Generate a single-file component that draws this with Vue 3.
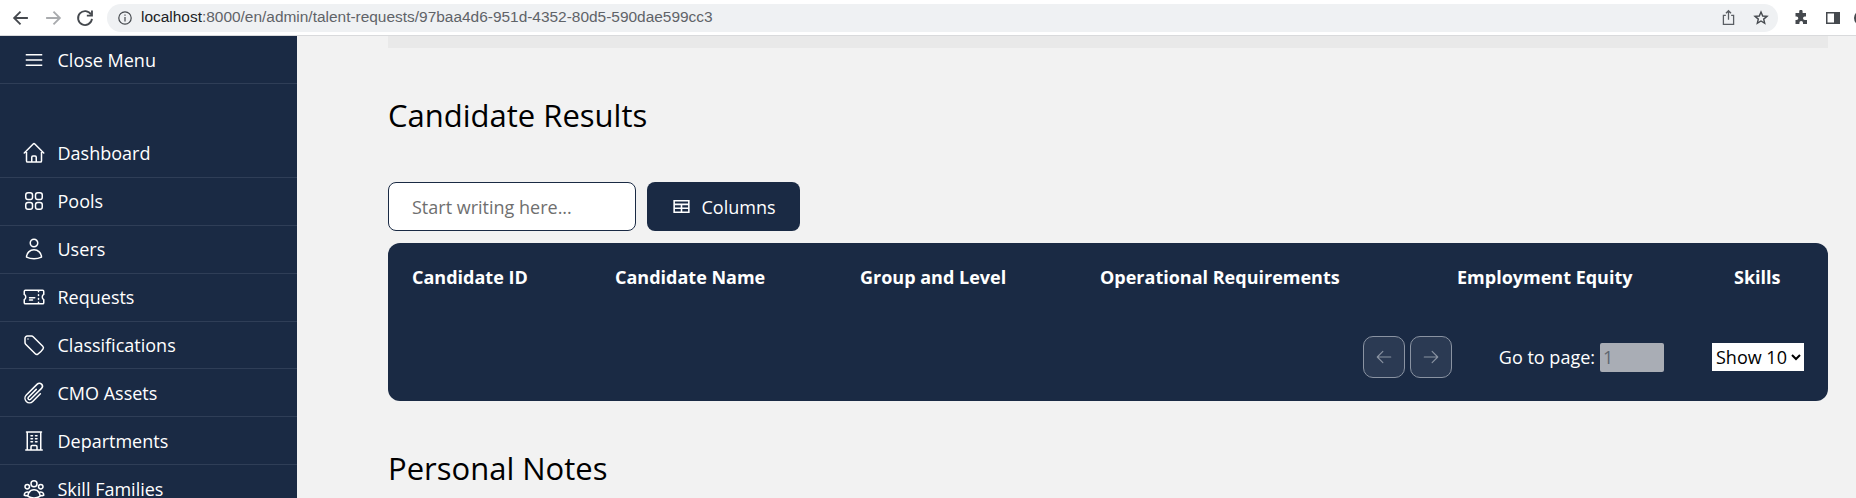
<script setup>
const navItems = [
  { label: 'Dashboard', d: 'M2.25 12l8.954-8.955c.44-.439 1.152-.439 1.591 0L21.75 12M4.5 9.75v10.125c0 .621.504 1.125 1.125 1.125H9.75v-4.875c0-.621.504-1.125 1.125-1.125h2.25c.621 0 1.125.504 1.125 1.125V21h4.125c.621 0 1.125-.504 1.125-1.125V9.75M8.25 21h8.25' },
  { label: 'Pools', d: 'M3.75 6A2.25 2.25 0 016 3.75h2.25A2.25 2.25 0 0110.5 6v2.25a2.25 2.25 0 01-2.25 2.25H6a2.25 2.25 0 01-2.25-2.25V6zM3.75 15.75A2.25 2.25 0 016 13.5h2.25a2.25 2.25 0 012.25 2.25V18a2.25 2.25 0 01-2.25 2.25H6A2.25 2.25 0 013.75 18v-2.25zM13.5 6a2.25 2.25 0 012.25-2.25H18A2.25 2.25 0 0120.25 6v2.25A2.25 2.25 0 0118 10.5h-2.25a2.25 2.25 0 01-2.25-2.25V6zM13.5 15.75a2.25 2.25 0 012.25-2.25H18a2.25 2.25 0 012.25 2.25V18A2.25 2.25 0 0118 20.25h-2.25A2.25 2.25 0 0113.5 18v-2.25z' },
  { label: 'Users', d: 'M15.75 6a3.75 3.75 0 11-7.5 0 3.75 3.75 0 017.5 0zM4.501 20.118a7.5 7.5 0 0114.998 0A17.933 17.933 0 0112 21.75c-2.676 0-5.216-.584-7.499-1.632z' },
  { label: 'Requests', d: 'M16.5 6v.75m0 3v.75m0 3v.75m0 3V18m-9-5.25h5.25M7.5 15h3M3.375 5.25c-.621 0-1.125.504-1.125 1.125v3.026a2.999 2.999 0 010 5.198v3.026c0 .621.504 1.125 1.125 1.125h17.25c.621 0 1.125-.504 1.125-1.125v-3.026a2.999 2.999 0 010-5.198V6.375c0-.621-.504-1.125-1.125-1.125H3.375z' },
  { label: 'Classifications', d: 'M9.568 3H5.25A2.25 2.25 0 003 5.25v4.318c0 .597.237 1.17.659 1.591l9.581 9.581c.699.699 1.78.872 2.607.33a18.095 18.095 0 005.223-5.223c.542-.827.369-1.908-.33-2.607L11.16 3.66A2.25 2.25 0 009.568 3zM6 6h.008v.008H6V6z' },
  { label: 'CMO Assets', d: 'M18.375 12.739l-7.693 7.693a4.5 4.5 0 01-6.364-6.364l10.94-10.94A3 3 0 1119.5 7.372L8.552 18.32m.009-.01l-.01.01m5.699-9.941l-7.81 7.81a1.5 1.5 0 002.112 2.13' },
  { label: 'Departments', d: 'M3.75 21h16.5M4.5 3h15M5.25 3v18m13.5-18v18M9 6.75h1.5m-1.5 3h1.5m-1.5 3h1.5m3-6H15m-1.5 3H15m-1.5 3H15M9 21v-3.375c0-.621.504-1.125 1.125-1.125h3.75c.621 0 1.125.504 1.125 1.125V21' },
  { label: 'Skill Families', d: 'M18 18.72a9.094 9.094 0 003.741-.479 3 3 0 00-4.682-2.72m.94 3.198l.001.031c0 .225-.012.447-.037.666A11.944 11.944 0 0112 21c-2.17 0-4.207-.576-5.963-1.584A6.062 6.062 0 016 18.719m12 0a5.971 5.971 0 00-.941-3.197m0 0A5.995 5.995 0 0012 12.75a5.995 5.995 0 00-5.058 2.772m0 0a3 3 0 00-4.681 2.72 8.986 8.986 0 003.74.477m.94-3.197a5.971 5.971 0 00-.94 3.197M15 6.75a3 3 0 11-6 0 3 3 0 016 0zm6 3a2.25 2.25 0 11-4.5 0 2.25 2.25 0 014.5 0zm-13.5 0a2.25 2.25 0 11-4.5 0 2.25 2.25 0 014.5 0z' }
]

const columns = ['Candidate ID', 'Candidate Name', 'Group and Level', 'Operational Requirements', 'Employment Equity', 'Skills']
</script>

<template>
  <div class="page">
    <header class="browser-bar">
      <svg class="nav-ico" viewBox="0 0 24 24" fill="none" stroke="#45494e" stroke-width="2"><path d="M19.5 12H5M11.5 5l-7 7 7 7" /></svg>
      <svg class="nav-ico" viewBox="0 0 24 24" fill="none" stroke="#a9abae" stroke-width="2"><path d="M4.5 12H19M12.5 5l7 7-7 7" /></svg>
      <svg class="nav-ico" viewBox="0 0 24 24" fill="none" stroke="#45494e" stroke-width="2"><path d="M18.6 8.2A7.600 7.600 0 1 0 19.600 13" /><path d="M19.600 3.800v5.600H14" /></svg>
      <div class="address">
        <svg class="info-ico" viewBox="0 0 16 16" fill="none" stroke="#45494e" stroke-width="1.200"><circle cx="8" cy="8" r="6.200" /><path d="M8 7v4.400M8 4.400v1.300" /></svg>
        <span class="url"><b>localhost</b>:8000/en/admin/talent-requests/97baa4d6-951d-4352-80d5-590dae599cc3</span>
        <svg class="addr-ico share" viewBox="0 0 16 16" fill="none" stroke="#5a5e63" stroke-width="1.200"><path d="M5.500 6H3.200v8.400h9.600V6h-2.300M8 10V1.800M5.600 4 8 1.600 10.400 4" /></svg>
        <svg class="addr-ico" viewBox="0 0 16 16" fill="none" stroke="#45494e" stroke-width="1.400"><path d="M8 2l1.700 4 4.300.3-3.300 2.800 1 4.200L8 11l-3.700 2.300 1-4.200L2 6.300l4.300-.3z" /></svg>
      </div>
      <svg class="ext-ico puzzle" viewBox="0 0 16 16" fill="#45494e"><path d="M6.200 1.500a1.700 1.700 0 0 1 3.400 0V3h3.400v3.400h-1.200a1.800 1.800 0 0 0 0 3.600H14v4H10v-1.200a1.800 1.800 0 0 0-3.600 0V14H2.500v-4h1a1.800 1.800 0 0 0 0-3.600h-1V3h3.700z" /></svg>
      <svg class="ext-ico panel" viewBox="0 0 16 16"><path fill="#45494e" d="M1 2h14v12H1z" /><path fill="#fff" d="M2.500 3.500H9v9H2.500z" /></svg>
      <span class="avatar"></span>
    </header>

    <div class="shell">
      <aside class="sidebar">
        <div class="menu-toggle">
          <svg class="side-ico" viewBox="0 0 24 24" fill="none" stroke="currentColor" stroke-width="1.500"><path d="M3.750 6.750h16.500M3.750 12h16.500M3.750 17.250h16.500" /></svg>
          <span>Close Menu</span>
        </div>
        <nav class="side-nav">
          <a v-for="item in navItems" :key="item.label" class="side-link">
            <svg class="side-ico" viewBox="0 0 24 24" fill="none" stroke="currentColor" stroke-width="1.500" stroke-linecap="round" stroke-linejoin="round"><path :d="item.d" /></svg>
            <span>{{ item.label }}</span>
          </a>
        </nav>
      </aside>

      <main class="content">
        <div class="top-strip"></div>
        <h2 class="section-title">Candidate Results</h2>

        <div class="toolbar">
          <input class="search" type="text" placeholder="Start writing here..." />
          <button class="columns-btn" type="button">
            <svg class="cols-ico" viewBox="0 0 20 20" fill="none" stroke="currentColor" stroke-width="1.500"><path d="M3 4.500h14v11H3zM3 8h14M3 11.700h14M10 8v7.500" /></svg>
            <span>Columns</span>
          </button>
        </div>

        <section class="results">
          <div class="results-head">
            <div v-for="col in columns" :key="col" class="head-cell">{{ col }}</div>
          </div>
          <div class="pager">
            <div class="pager-arrows">
              <button class="arrow" type="button" disabled>
                <svg viewBox="0 0 24 24" fill="none" stroke="currentColor" stroke-width="1.500" stroke-linecap="round" stroke-linejoin="round"><path d="M10.500 19.500L3 12m0 0l7.500-7.500M3 12h18" /></svg>
              </button>
              <button class="arrow" type="button" disabled>
                <svg viewBox="0 0 24 24" fill="none" stroke="currentColor" stroke-width="1.500" stroke-linecap="round" stroke-linejoin="round"><path d="M13.500 4.500L21 12m0 0l-7.500 7.500M21 12H3" /></svg>
              </button>
            </div>
            <label class="goto">
              <span>Go to page:</span>
              <input class="goto-input" type="number" value="1" disabled />
            </label>
            <select class="page-size">
              <option>Show 10</option>
              <option>Show 20</option>
              <option>Show 50</option>
            </select>
          </div>
        </section>

        <h2 class="section-title">Personal Notes</h2>
      </main>
    </div>
  </div>
</template>

<style>
html, body {
  margin: 0;
  overflow: hidden;
}
</style>

<style scoped>
.page {
  height: 100vh;
  display: flex;
  flex-direction: column;
  overflow: hidden;
  background: #f2f2f2;
  font-family: "Open Sans", "Noto Sans", sans-serif;
}

/* browser chrome */
.browser-bar {
  flex: none;
  height: 35px;
  display: flex;
  align-items: center;
  padding-left: 10px;
  background: #fff;
  border-bottom: 1px solid #d9dadc;
  overflow: hidden;
}

.nav-ico {
  flex: none;
  width: 22px;
  height: 22px;
  margin-right: 10px;
}

.nav-ico:nth-child(3) {
  margin-right: 11px;
}

.address {
  flex: 0 0 1671px;
  height: 28px;
  display: flex;
  align-items: center;
  padding: 0 9px 0 34px;
  box-sizing: border-box;
  border-radius: 14px;
  background: #eff1f3;
  position: relative;
}

.info-ico {
  position: absolute;
  left: 10px;
  top: 6px;
  width: 16px;
  height: 16px;
}

.url {
  flex: 1;
  padding-bottom: 2px;
  font: 15.45px "Liberation Sans", Arial, sans-serif;
  color: #5f6368;
  white-space: nowrap;
}

.url b {
  font-weight: 400;
  color: #202124;
}

.addr-ico {
  flex: none;
  width: 16px;
  height: 16px;
}

.share {
  margin-right: 16px;
  width: 17px;
  height: 17px;
}

.ext-ico {
  flex: none;
  width: 16px;
  height: 16px;
}

.puzzle {
  margin-left: 15px;
}

.panel {
  margin-left: 16px;
}

.avatar {
  flex: none;
  width: 16px;
  height: 16px;
  margin-left: 13px;
  border-radius: 50%;
  background: #45494e;
}

/* layout */
.shell {
  flex: 1;
  min-height: 0;
  display: flex;
}

.sidebar {
  flex: none;
  width: 297px;
  background: #1a2a44;
  color: #fff;
  overflow: hidden;
}

.menu-toggle {
  height: 48px;
  display: flex;
  align-items: center;
  gap: 11.5px;
  padding-left: 22px;
  box-sizing: border-box;
  font-size: 18px;
  border-bottom: 1px solid #2f3e57;
}

.side-nav {
  margin-top: 46px;
}

.side-link {
  height: 46.875px;
  display: flex;
  align-items: center;
  gap: 11.5px;
  padding-left: 22px;
  font-size: 18px;
  border-bottom: 1px solid #2f3e57;
}

.side-ico {
  flex: none;
  width: 24px;
  height: 24px;
}

.content {
  flex: 1;
  min-width: 0;
  padding: 0 28px 0 91px;
}

.top-strip {
  height: 12px;
  background: #e9e9e9;
}

.section-title {
  margin: 0;
  padding-top: 45px;
  font-size: 31px;
  line-height: 44px;
  font-weight: 400;
  color: #000;
}

.toolbar {
  display: flex;
  gap: 11px;
  margin-top: 45px;
}

.search {
  width: 248px;
  height: 49px;
  box-sizing: border-box;
  padding: 0 23px;
  border: 1px solid #1a2a44;
  border-radius: 8px;
  background: #fff;
  font: 18px "Open Sans", sans-serif;
  outline: none;
}

.search::placeholder {
  color: #6f6f6f;
  opacity: 1;
}

.columns-btn {
  width: 153px;
  height: 49px;
  display: flex;
  align-items: center;
  justify-content: center;
  gap: 9px;
  border: none;
  border-radius: 8px;
  background: #1a2a44;
  color: #fff;
  font: 18px "Open Sans", sans-serif;
}

.cols-ico {
  width: 21px;
  height: 21px;
}

.results {
  margin-top: 12px;
  height: 158px;
  border-radius: 12px;
  background: #1a2a44;
  color: #fff;
}

.results-head {
  display: grid;
  grid-template-columns: 203px 245px 240px 357px 277px 118px;
  height: 68px;
  align-items: center;
}

.head-cell {
  padding-left: 24px;
  font-size: 18px;
  font-weight: 700;
  white-space: nowrap;
}

.pager {
  display: flex;
  align-items: center;
  justify-content: flex-end;
  gap: 47px;
  padding: 25px 24px 0 0;
}

.pager-arrows {
  display: flex;
  gap: 5px;
}

.arrow {
  width: 42px;
  height: 42px;
  padding: 0;
  display: flex;
  align-items: center;
  justify-content: center;
  border: 1px solid #8a93a2;
  border-radius: 10px;
  background: #2b3a53;
  color: #8a93a2;
}

.arrow svg {
  width: 18px;
  height: 18px;
}

.goto {
  display: flex;
  align-items: center;
  gap: 5px;
  font-size: 18px;
}

.goto-input {
  width: 64px;
  height: 29px;
  box-sizing: border-box;
  padding: 0 3px;
  border: none;
  border-radius: 2px;
  background: #a9adb5;
  color: #5f6670;
  font: 18px "Open Sans", sans-serif;
  appearance: textfield;
}

.page-size {
  margin-left: 1px;
  width: 92px;
  height: 28px;
  border: none;
  border-radius: 0;
  background-color: #fff;
  color: #000;
  font: 18px "Open Sans", sans-serif;
}
</style>
